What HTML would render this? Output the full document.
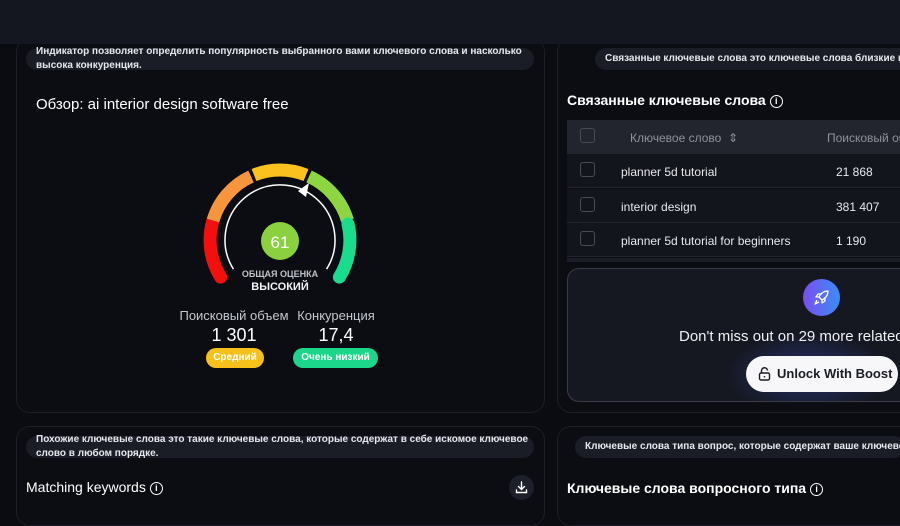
<!DOCTYPE html>
<html><head><meta charset="utf-8"><style>
*{margin:0;padding:0;box-sizing:border-box}
body{width:900px;height:506px;overflow:hidden;background:#0a0c11;font-family:"Liberation Sans","DejaVu Sans",sans-serif;color:#fff;position:relative}
.hdr{position:absolute;left:0;top:0;width:900px;height:44px;background:#141720}
.card{position:absolute;border:1px solid #1c1f27;border-radius:14px;background:#0b0d13}
.tip{position:absolute;background:#1a1d25;border-radius:12px;font-size:10px;font-weight:bold;color:#e6e8ee;line-height:14px;white-space:nowrap;overflow:hidden}
.ab{position:absolute;white-space:nowrap}
.info{display:inline-block;width:13px;height:13px;border:1.3px solid #fff;border-radius:50%;font-size:9px;text-align:center;line-height:11px;font-weight:bold;vertical-align:middle;margin-left:4px}
.cb{position:absolute;width:15px;height:15px;border:1px solid #474b55;border-radius:3px}
.row{position:absolute;left:567px;width:333px;height:34px;background:#13151c;border-bottom:1px solid #22252d;font-size:12px;color:#e8e9ee}
</style></head><body>
<div class="card" style="left:16px;top:38px;width:529px;height:375px"></div>
<div class="card" style="left:557px;top:38px;width:360px;height:375px"></div>
<div class="card" style="left:16px;top:426px;width:529px;height:100px"></div>
<div class="card" style="left:557px;top:426px;width:360px;height:100px"></div>
<div class="hdr"></div>

<div class="tip" style="left:26px;top:48px;width:508px;height:22px"></div>
<div class="ab" style="left:36px;top:45px;font-size:10px;font-weight:bold;color:#e6e8ee;line-height:14px">Индикатор позволяет определить популярность выбранного вами ключевого слова и насколько<br>высока конкуренция.</div>
<div class="ab" style="left:36px;top:96px;font-size:15px">Обзор: ai interior design software free</div>

<svg class="ab" style="left:0;top:0" width="560" height="400">
<g fill="none" stroke-width="13">
<path d="M220.6 277.1 A70 70 0 0 1 212.5 222" stroke="#f40f0f" stroke-linecap="round"/>
<path d="M213 220.5 A70 70 0 0 1 251 176.5" stroke="#f7953c"/>
<path d="M254 175 A70 70 0 0 1 306 175" stroke="#fbc21f"/>
<path d="M309 176.5 A70 70 0 0 1 347.5 220.5" stroke="#8dd642"/>
<path d="M348 224 A70 70 0 0 1 339.4 277.1" stroke="#19dc8d" stroke-linecap="round"/>
</g>
<path d="M233.4 269.1 A55 55 0 1 1 326.6 269.1" fill="none" stroke="#fff" stroke-width="1.5"/>
<polygon points="309,183 298,191 306,197" fill="#fff"/>
<circle cx="280" cy="241" r="19" fill="#8bd13f"/>
<text x="280" y="248" text-anchor="middle" font-size="17" fill="#fff" font-family="Liberation Sans">61</text>
</svg>
<div class="ab" style="left:220px;top:269px;width:120px;text-align:center;font-size:9px;font-weight:bold;color:#bfc2c9">ОБЩАЯ ОЦЕНКА</div>
<div class="ab" style="left:220px;top:281px;width:120px;text-align:center;font-size:11px;font-weight:bold;color:#f2f3f5">ВЫСОКИЙ</div>
<div class="ab" style="left:174px;top:308px;width:120px;text-align:center;font-size:13px;color:#c4c7ce">Поисковый объем</div>
<div class="ab" style="left:174px;top:325px;width:120px;text-align:center;font-size:18px">1 301</div>
<div class="ab" style="left:206px;top:348px;width:58px;height:20px;border-radius:10px;background:#f6c11a;text-align:center;line-height:20px;font-size:10px;font-weight:bold">Средний</div>
<div class="ab" style="left:276px;top:308px;width:120px;text-align:center;font-size:13px;color:#c4c7ce">Конкуренция</div>
<div class="ab" style="left:276px;top:325px;width:120px;text-align:center;font-size:18px">17,4</div>
<div class="ab" style="left:293px;top:348px;width:85px;height:20px;border-radius:10px;background:#1cd68b;text-align:center;line-height:20px;font-size:10px;font-weight:bold">Очень низкий</div>

<div class="tip" style="left:26px;top:436px;width:508px;height:22px"></div>
<div class="ab" style="left:36px;top:433px;font-size:10px;font-weight:bold;color:#e6e8ee;line-height:14px">Похожие ключевые слова это такие ключевые слова, которые содержат в себе искомое ключевое<br>слово в любом порядке.</div>
<div class="ab" style="left:26px;top:479px;font-size:14px">Matching keywords<span class="info">i</span></div>
<div class="ab" style="left:509px;top:475px;width:25px;height:25px;border-radius:50%;background:#1d2029"></div>
<svg class="ab" style="left:515px;top:481px" width="13" height="13" fill="none" stroke="#fff" stroke-width="1.4" stroke-linecap="round"><path d="M6.5 1v7M3.5 5.5l3 3 3-3M1.5 9v2.5h10V9"/></svg>

<div class="tip" style="left:595px;top:48px;width:320px;height:22px;padding:4px 0 0 10px">Связанные ключевые слова это ключевые слова близкие по см</div>
<div class="ab" style="left:567px;top:92px;font-size:14px;font-weight:bold">Связанные ключевые слова<span class="info">i</span></div>
<div class="ab" style="left:567px;top:120px;width:333px;height:34px;background:#22252e"></div>
<div class="cb" style="left:580px;top:128px"></div>
<div class="ab" style="left:630px;top:131px;font-size:12px;color:#8e929b">Ключевое слово&nbsp; ⇕</div>
<div class="ab" style="left:827px;top:131px;font-size:12px;color:#8e929b">Поисковый об</div>
<div class="row" style="top:154px"><div class="cb" style="left:13px;top:8px"></div><span class="ab" style="left:54px;top:11px">planner 5d tutorial</span><span class="ab" style="left:269px;top:11px">21 868</span></div>
<div class="row" style="top:189px"><div class="cb" style="left:13px;top:8px"></div><span class="ab" style="left:54px;top:11px">interior design</span><span class="ab" style="left:269px;top:11px">381 407</span></div>
<div class="row" style="top:223px"><div class="cb" style="left:13px;top:8px"></div><span class="ab" style="left:54px;top:11px">planner 5d tutorial for beginners</span><span class="ab" style="left:269px;top:11px">1 190</span></div>
<div class="ab" style="left:567px;top:258px;width:333px;height:4px;background:#1a1d25"></div>
<div class="ab" style="left:567px;top:268px;width:345px;height:134px;border:1.5px solid #3a3d46;border-radius:12px;background:#151821;overflow:hidden">
<div class="ab" style="left:150px;top:60px;width:180px;height:90px;background:radial-gradient(ellipse at center,rgba(60,80,200,.45),rgba(0,0,0,0) 65%)"></div>
</div>
<div class="ab" style="left:803px;top:279px;width:37px;height:37px;border-radius:50%;background:linear-gradient(90deg,#7a4df0,#3a8ef5)"></div>
<svg class="ab" style="left:813px;top:289px" width="17" height="17" fill="none" stroke="#fff" stroke-width="1.3" stroke-linejoin="round"><path d="M15 2c-4 0-7 2-9 6l3 3c4-2 6-5 6-9zM6 8H3l2-3h4M9 11v3l3-2V8"/><path d="M4 11l-2 4 4-2"/></svg>
<div class="ab" style="left:679px;top:328px;font-size:15px;color:#f0f1f4">Don't miss out on 29 more related</div>
<div class="ab" style="left:746px;top:356px;width:152px;height:36px;border-radius:18px;background:#f7f7f9;color:#1b1d24;font-size:13px;font-weight:bold;line-height:36px;padding-left:31px">Unlock With Boost</div>
<svg class="ab" style="left:758px;top:367px" width="13" height="14" fill="none" stroke="#1b1d24" stroke-width="1.4"><rect x="1.5" y="6" width="10" height="7" rx="1.5"/><path d="M3.5 6V4a3 3 0 0 1 6-0.5M6.5 9v1.5"/></svg>

<div class="tip" style="left:575px;top:436px;width:330px;height:22px;padding:4px 0 0 10px">Ключевые слова типа вопрос, которые содержат ваше ключевое сл</div>
<div class="ab" style="left:567px;top:480px;font-size:14px;font-weight:bold">Ключевые слова вопросного типа<span class="info">i</span></div>
</body></html>
